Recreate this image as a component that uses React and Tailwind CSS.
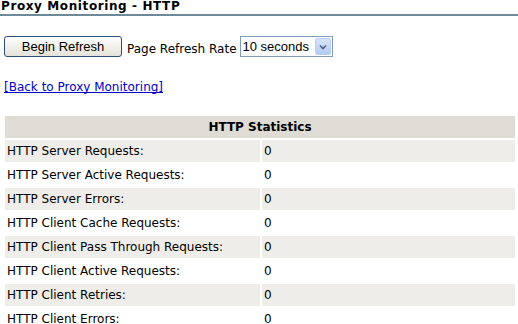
const stats = [
	['HTTP Server Requests:', '0'],
	['HTTP Server Active Requests:', '0'],
	['HTTP Server Errors:', '0'],
	['HTTP Client Cache Requests:', '0'],
	['HTTP Client Pass Through Requests:', '0'],
	['HTTP Client Active Requests:', '0'],
	['HTTP Client Retries:', '0'],
	['HTTP Client Errors:', '0'],
];

export default function App() {
	return (
		<div className="w-[518px] h-[324px] overflow-hidden bg-white text-black font-['DejaVu_Sans',sans-serif] text-[12px]">
			<div className="h-[14px] leading-[13px] font-bold text-[12px] tracking-[0.6px] pl-[1px]">
				Proxy Monitoring - HTTP
			</div>
			<div className="h-[2px] bg-[#6e8a99]"></div>

			<div className="flex items-center mt-[20px] ml-[4px] h-[21px]">
				<button className="w-[118px] h-[21px] rounded-[3px] border border-[#2a4f7a] bg-gradient-to-b from-white to-[#e4e2d8] font-['Liberation_Sans',sans-serif] text-[13px] leading-[19px] text-black">
					Begin Refresh
				</button>
				<span className="ml-[5px] mt-[4px] text-[12px]">Page Refresh Rate</span>
				<div className="ml-[3px] w-[93px] h-[21px] border border-[#7f9db9] flex items-center bg-white">
					<span className="flex-1 pl-[2px] font-['Liberation_Sans',sans-serif] text-[13px] leading-[19px]">10 seconds</span>
					<div className="w-[16px] h-[17px] mr-[1px] rounded-[2px] bg-gradient-to-b from-[#d8e4fb] to-[#b4c9f2] border border-[#bccef3] flex items-center justify-center">
						<svg width="8" height="6" viewBox="0 0 8 6">
							<path d="M1 1.5 L4 4.5 L7 1.5" fill="none" stroke="#4d6185" strokeWidth="1.6" />
						</svg>
					</div>
				</div>
			</div>

			<div className="mt-[23px] ml-[4px] h-[14px] leading-[14px]">
				<a href="#" className="text-[#0000cc] underline underline-offset-[1px] [text-decoration-skip-ink:none]">[Back to Proxy Monitoring]</a>
			</div>

			<div className="mx-[5px] mt-[22px] w-[510px]">
				<div className="h-[22px] bg-[#dfdcd6] flex items-center justify-center font-bold">
					HTTP Statistics
				</div>
				<div className="flex flex-col gap-[2px] mt-[2px]">
					{stats.map(([label, value], i) => (
						<div key={label} className="flex gap-[2px] h-[22px]">
							<div className={`w-[255px] flex items-center pl-[2px] ${i % 2 === 0 ? 'bg-[#efede9]' : 'bg-white'}`}>
								{label}
							</div>
							<div className={`flex-1 flex items-center pl-[2px] ${i % 2 === 0 ? 'bg-[#efede9]' : 'bg-white'}`}>
								{value}
							</div>
						</div>
					))}
				</div>
			</div>
		</div>
	);
}
